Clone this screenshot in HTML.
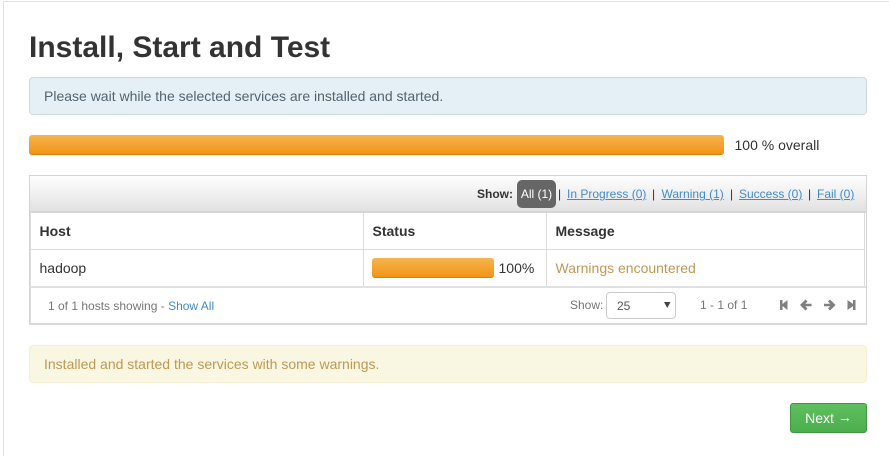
<!DOCTYPE html>
<html><head><meta charset="utf-8">
<style>
html,body{margin:0;padding:0;background:#fff;overflow:hidden}
body{width:889px;height:456px;font-family:"Liberation Sans",sans-serif;font-size:14px;color:#333}
#w{position:relative;width:889px;height:456px;overflow:hidden}
.a{position:absolute;white-space:nowrap}
.bar{position:absolute;border-radius:3px;background:linear-gradient(#f6b44f,#f29415);border-bottom:1px solid #d9800f;box-sizing:border-box}
a{color:#428bca;text-decoration:underline}
.ln{position:absolute;background:#ddd}
.f{font-size:12px;color:#777}
.t{font-size:12px;line-height:16px;top:186px}
.s{color:#333}
</style></head><body><div id="w">
<div class="a" style="left:3px;top:1px;right:-5px;bottom:-5px;border:1px solid #e3e3e3"></div>
<div class="a" style="left:29px;top:31px;font-size:30px;font-weight:bold;line-height:34px;color:#333">Install, Start and Test</div>
<div class="a" style="left:29px;top:77px;width:838px;height:38px;box-sizing:border-box;background:#e4f0f5;border:1px solid #cfdbe3;border-radius:4px;padding:10px 14px;line-height:17px;color:#54636e">Please wait while the selected services are installed and started.</div>
<div class="bar" style="left:29px;top:135px;width:695px;height:20px"></div>
<div class="a" style="left:734.500px;top:137px;line-height:16px">100 % overall</div>

<div class="a" style="left:29px;top:175px;width:838px;height:150px;box-sizing:border-box;border:1px solid #d4d4d4;border-bottom:2px solid #d8d8d8"></div>
<div class="a" style="left:30px;top:176px;width:836px;height:35px;background:linear-gradient(#fefefe,#e2e2e2)"></div>
<div class="ln" style="left:30px;top:211px;width:836px;height:2px;background:#d6d6d6"></div>
<div class="a t" style="left:477px;font-weight:bold;color:#333">Show:</div>
<div class="a" style="left:517px;top:180px;width:39px;height:28px;background:#666;border-radius:5px;color:#fff;font-size:12px;line-height:28px;text-align:center">All (1)</div>
<div class="a t s" style="left:558px">|</div>
<a class="a t" style="left:567px">In Progress (0)</a>
<div class="a t s" style="left:652px">|</div>
<a class="a t" style="left:661.500px">Warning (1)</a>
<div class="a t s" style="left:730px">|</div>
<a class="a t" style="left:739px">Success (0)</a>
<div class="a t s" style="left:808px">|</div>
<a class="a t" style="left:817px">Fail (0)</a>

<div class="ln" style="left:30px;top:213px;width:1px;height:111px;background:#dedede"></div>
<div class="ln" style="left:864px;top:213px;width:1px;height:74px"></div>
<div class="ln" style="left:363px;top:213px;width:1px;height:74px"></div>
<div class="ln" style="left:546px;top:213px;width:1px;height:74px"></div>
<div class="ln" style="left:30px;top:249px;width:835px;height:1px"></div>
<div class="ln" style="left:30px;top:286px;width:836px;height:2px;background:#e0e0e0"></div>

<div class="a" style="left:39.500px;top:223px;font-weight:bold;line-height:16px">Host</div>
<div class="a" style="left:372.500px;top:223px;font-weight:bold;line-height:16px">Status</div>
<div class="a" style="left:555.500px;top:223px;font-weight:bold;line-height:16px">Message</div>
<div class="a" style="left:39.500px;top:260px;line-height:16px">hadoop</div>
<div class="bar" style="left:372px;top:258px;width:122px;height:20px"></div>
<div class="a" style="left:498.500px;top:260px;line-height:16px">100%</div>
<div class="a" style="left:555.500px;top:260px;line-height:16px;color:#c09853">Warnings encountered</div>

<div class="a f" style="left:48px;top:298px;line-height:16px">1 of 1 hosts showing - <span style="color:#428bca">Show All</span></div>
<div class="a f" style="left:570px;top:297px;line-height:16px">Show:</div>
<div class="a" style="left:606px;top:292px;width:70px;height:27px;box-sizing:border-box;border:1px solid #ccc;border-radius:4px;background:#fff;font-size:12px;line-height:26px;padding-left:10px;color:#555">25</div>
<svg class="a" style="left:664px;top:302px" width="7" height="7"><path d="M0 0H6.500L3.250 6Z" fill="#444"/></svg>
<div class="a f" style="left:700px;top:297px;line-height:16px">1 - 1 of 1</div>
<svg class="a" style="left:779px;top:298px" width="80" height="14" fill="#808080">
<path d="M1 2H3.500V6L8.500 2V12L3.500 8V12H1Z"/>
<path d="M21 7L26.500 1.500L28.500 3.500L26.300 5.700H32.500V8.300H26.300L28.500 10.500L26.500 12.500Z"/>
<path d="M56.500 7L51 1.500L49 3.500L51.200 5.700H45V8.300H51.200L49 10.500L51 12.500Z"/>
<path d="M76.500 2H74V6L68.500 2V12L74 8V12H76.500Z"/>
</svg>

<div class="a" style="left:29px;top:345px;width:838px;height:38px;box-sizing:border-box;background:#f9f7e1;border:1px solid #f5efd6;border-radius:4px;padding:10px 14px;line-height:17px;color:#c09853">Installed and started the services with some warnings.</div>

<div class="a" style="left:790px;top:403px;width:77px;height:30px;box-sizing:border-box;background:linear-gradient(#5fbf5f,#4cae4c);border:1px solid #419641;border-radius:3px;color:#fff;line-height:28px;text-align:center">Next <span style="position:relative;top:-1px">→</span></div>
</div></body></html>
